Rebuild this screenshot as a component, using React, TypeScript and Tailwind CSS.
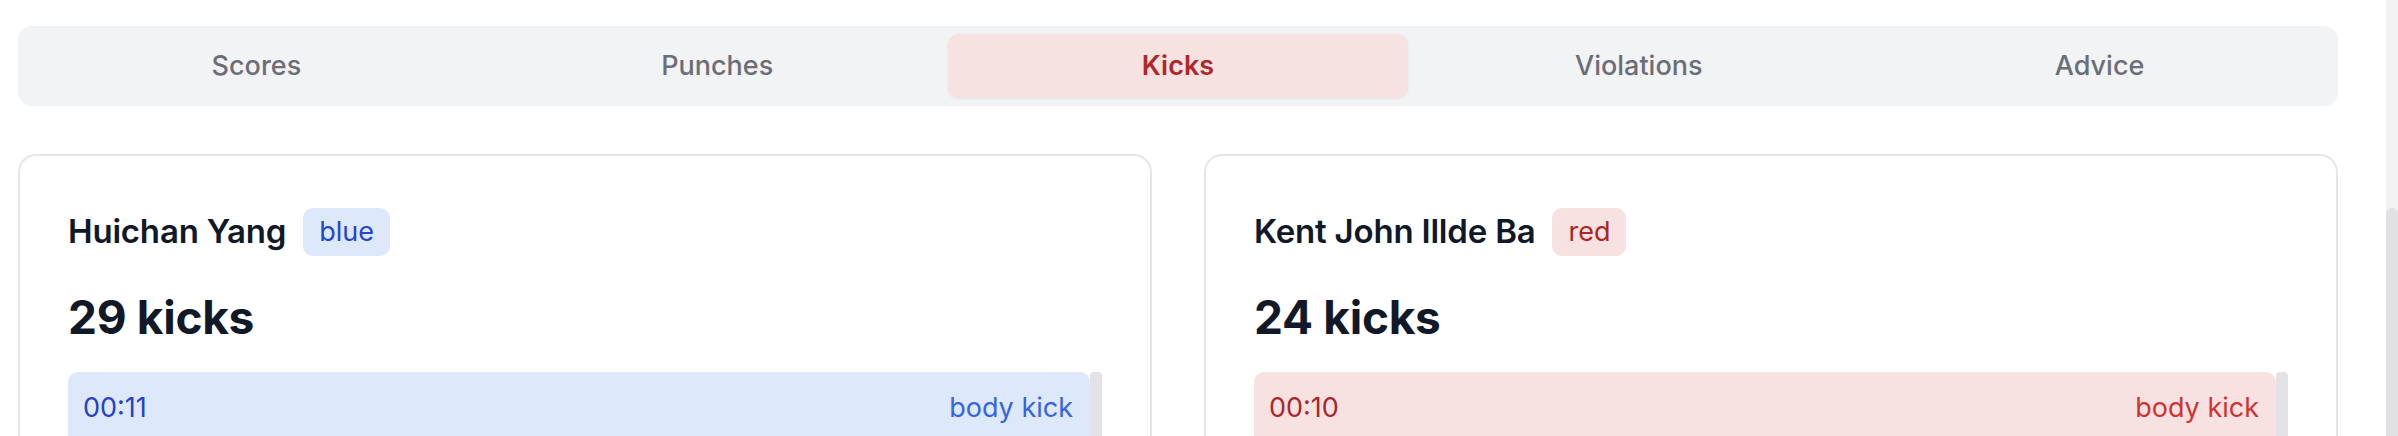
import React from "react";

const tabs = ["Scores", "Punches", "Kicks", "Violations", "Advice"];

type Side = "blue" | "red";

function FighterCard({
  name,
  side,
  count,
  time,
  label,
}: {
  name: string;
  side: Side;
  count: number;
  time: string;
  label: string;
}) {
  const isBlue = side === "blue";
  return (
    <div className="rounded-[18px] border-2 border-[#e6e6e8] bg-white p-[48px] h-[600px]">
      <div className="flex h-[56px] items-center gap-[17px]">
        <span className="text-[33px] font-semibold tracking-[-0.2px] text-[#111827]">{name}</span>
        {isBlue ? (
          <span className="flex h-[48px] items-center rounded-[10px] bg-[#dde8fb] px-[16px] text-[27px] text-[#2743d1]">
            blue
          </span>
        ) : (
          <span className="flex h-[48px] items-center rounded-[10px] bg-[#f8e1e1] px-[16px] text-[27px] text-[#ad2622]">
            red
          </span>
        )}
      </div>
      <div className="mt-[27px] text-[46px] font-bold leading-[60px] tracking-[-0.3px] text-[#111827]">
        {count} kicks
      </div>
      <div className="mt-[25px] flex">
        <div className="flex-1">
          {isBlue ? (
            <div className="flex h-[72px] items-center justify-between rounded-[10px] bg-[#dee8fb] pl-[15px] pr-[17px] text-[27px]">
              <span className="text-[#2440cc]">{time}</span>
              <span className="text-[#3565e0]">{label}</span>
            </div>
          ) : (
            <div className="flex h-[72px] items-center justify-between rounded-[10px] bg-[#f8e1e1] pl-[15px] pr-[17px] text-[27px]">
              <span className="text-[#a9272a]">{time}</span>
              <span className="text-[#d0332f]">{label}</span>
            </div>
          )}
        </div>
        <div className="h-[300px] w-[12px] rounded-t-[4px] bg-[#e3e3e5]" />
      </div>
    </div>
  );
}

export default function App() {
  return (
    <div
      className="flex h-[436px] w-[2398px] overflow-hidden bg-white"
      style={{ fontFamily: "Inter, 'Noto Sans', sans-serif" }}
    >
      <div className="flex-1 pl-[18px] pr-[48px] pt-[26px]">
        <div className="grid h-[80px] grid-cols-5 rounded-[14px] bg-[#f2f3f5] p-[8px]">
          {tabs.map((t) =>
            t === "Kicks" ? (
              <div
                key={t}
                className="flex items-center justify-center rounded-[10px] bg-[#f7e2e2] text-[27px] font-semibold text-[#b0282a] shadow-[0_1px_3px_rgba(0,0,0,0.06)]"
              >
                {t}
              </div>
            ) : (
              <div
                key={t}
                className="flex items-center justify-center text-[27px] font-medium text-[#6b6e76]"
              >
                {t}
              </div>
            )
          )}
        </div>
        <div className="mt-[48px] grid grid-cols-2 gap-[52px]">
          <FighterCard name="Huichan Yang" side="blue" count={29} time="00:11" label="body kick" />
          <FighterCard name="Kent John Illde Ba" side="red" count={24} time="00:10" label="body kick" />
        </div>
      </div>
      <div className="flex w-[12px] flex-col bg-[#f3f3f4]">
        <div className="mt-[208px] flex-1 rounded-t-[6px] bg-[#e1e1e4]" />
      </div>
    </div>
  );
}
